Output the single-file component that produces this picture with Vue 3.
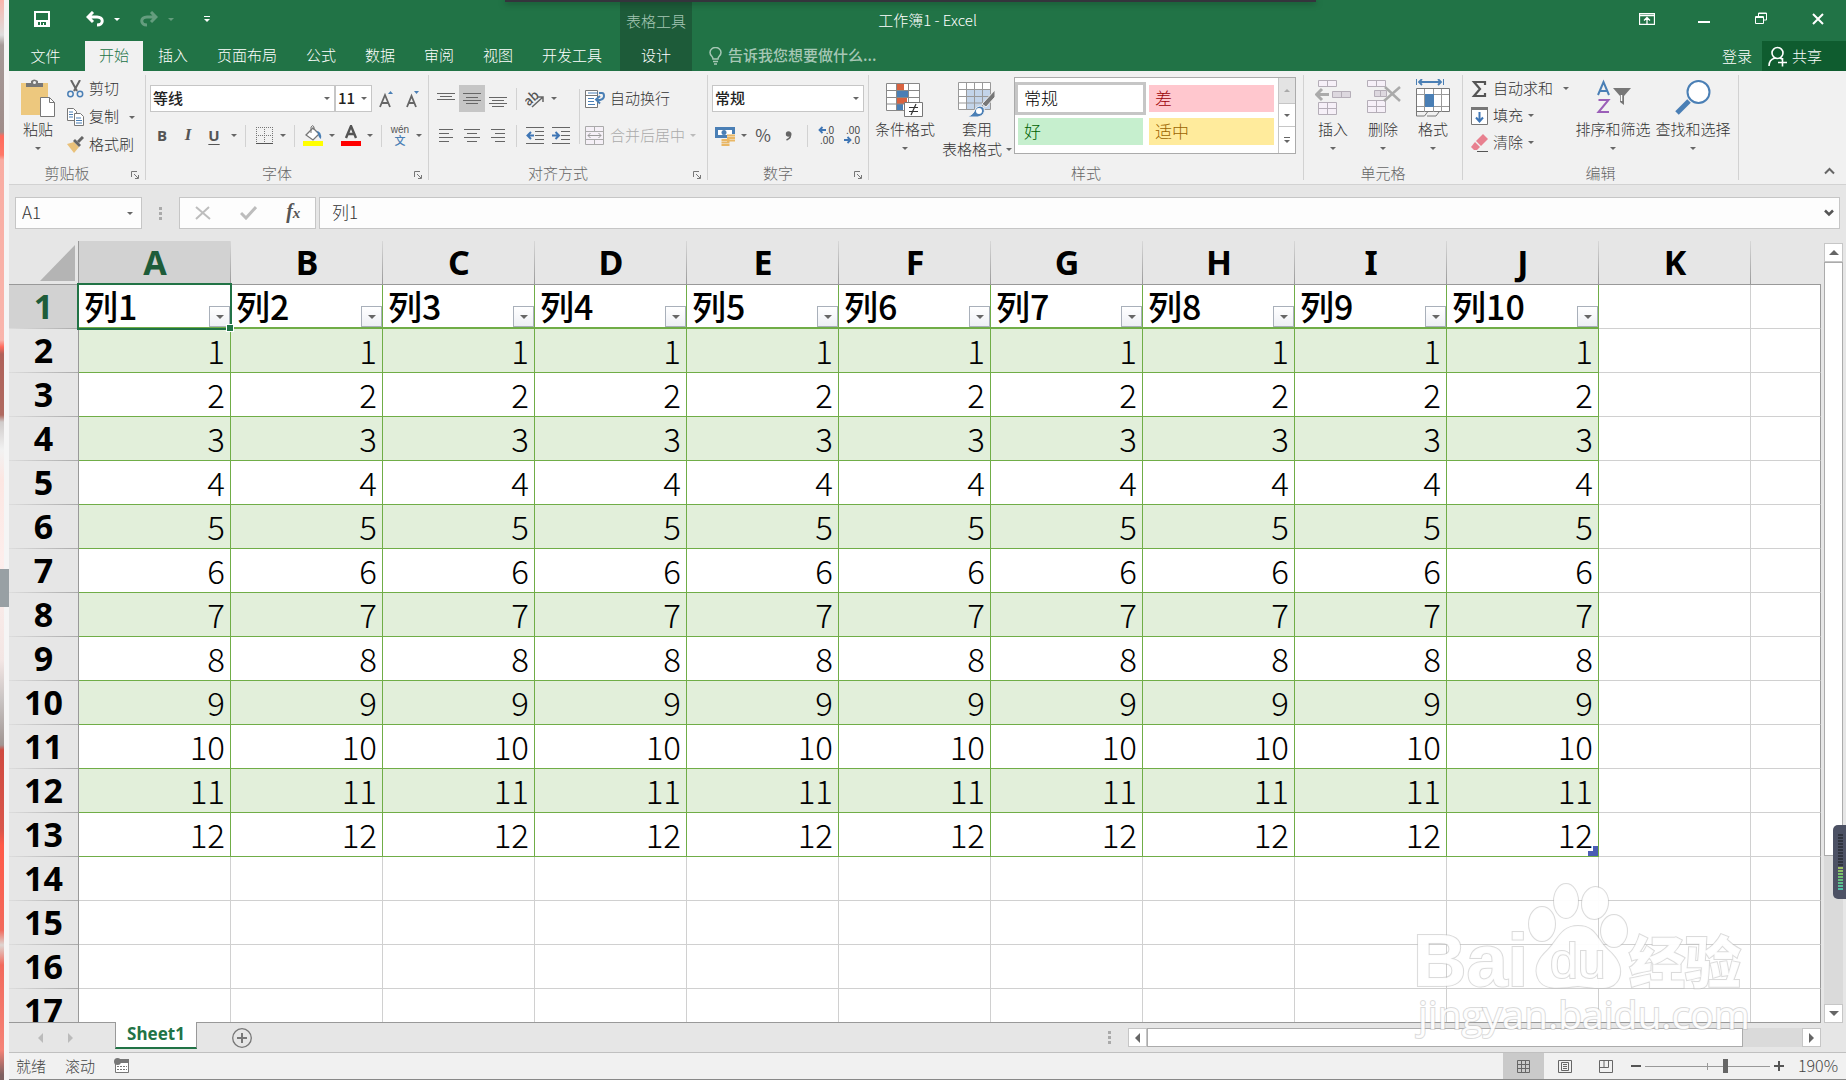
<template>
    <div class="desktop">
        <div class="behind"><span class="behind-chip"></span></div>

        <div class="window">
            <header class="header">
                <div class="quick">
                    <button class="q-save" aria-label="保存">
                        <svg width="16" height="16" viewBox="0 0 16 16"><path d="M0 0h16v16H0z M2 2v7h12V2z M4 11v3h2v-3z M7 11v3h2v-2h1v2h2v-3z" fill="#fff" fill-rule="evenodd" /></svg>
                    </button>
                    <button class="q-undo" aria-label="撤消">
                        <svg width="18" height="16" viewBox="0 0 18 16"><path d="M7 1 2 6l5 5M2 6h9c7 0 7 8 0 8" fill="none" stroke="#fff" stroke-width="3" /></svg>
                    </button>
                    <button class="q-caret" aria-label="撤消列表"><i class="caret"></i></button>
                    <button class="q-redo dim" aria-label="恢复">
                        <svg width="18" height="16" viewBox="0 0 18 16"><path d="M11 1l5 5-5 5M16 6H7c-7 0-7 8 0 8" fill="none" stroke="#fff" stroke-width="3" /></svg>
                    </button>
                    <button class="q-caret dim" aria-label="恢复列表"><i class="caret"></i></button>
                    <button class="q-more" aria-label="自定义快速访问工具栏"><i class="bar"></i><i class="caret"></i></button>
                </div>

                <div class="context-title">表格工具</div>
                <h1 class="title">工作簿1 - Excel</h1>

                <div class="win-buttons">
                    <button aria-label="功能区显示选项">
                        <svg width="16" height="12" viewBox="0 0 16 12"><path d="M.5.5h15v11H.5zM1 2.500h14M8 11V5M5 7.500l3-3 3 3" fill="none" stroke="#fff" stroke-width="1.300" /></svg>
                    </button>
                    <button aria-label="最小化">
                        <svg width="12" height="12" viewBox="0 0 12 12"><path d="M0 8h12v2H0z" fill="#fff" /></svg>
                    </button>
                    <button aria-label="还原">
                        <svg width="12" height="14" viewBox="0 0 12 14"><path d="M.5 4.500h8v7h-8zM.5 5.500h8M3.500 4V1h8v7H9M3 1.500h9" fill="none" stroke="#fff" /></svg>
                    </button>
                    <button aria-label="关闭">
                        <svg width="12" height="12" viewBox="0 0 12 12"><path d="M1 1l10 10M11 1 1 11" stroke="#fff" stroke-width="2" /></svg>
                    </button>
                </div>

                <nav class="tabs">
                    <button class="tab file">文件</button>
                    <button v-for="t in tabs" :key="t" class="tab" :class="{ active: t === activeTab }" @click="activeTab = t">{{ t }}</button>
                </nav>
                <button class="tab context-tab">设计</button>
                <div class="tab-right">
                    <svg class="bulb" width="13" height="18" viewBox="0 0 13 18"><path d="M4 12C4 9 1 9 1 5.500a5.500 5 0 0 1 11 0C12 9 9 9 9 12zM4 14.500h5M5 17h3" fill="none" stroke="#a6c7b5" stroke-width="1.500" /></svg>
                    <input class="tell" aria-label="告诉我" placeholder="告诉我您想要做什么...">
                    <a class="login" href="#">登录</a>
                    <button class="share">
                        <svg width="20" height="21" viewBox="0 0 20 21"><g fill="none" stroke="#fff" stroke-width="1.600"><circle cx="9.500" cy="7" r="5.500" /><path d="M1 20c0-4 2-7 6-8M12 12l2 1M10 16.500h9M14.500 12v8.500" /></g></svg>
                        共享
                    </button>
                </div>
            </header>

            <section class="ribbon">
                <div class="group clipboard">
                    <div class="body">
                        <button class="big paste">
                            <svg width="34" height="40" viewBox="0 0 34 40"><path d="M0 4h27v32H0z" fill="#edc87e" /><path d="M5 8V4h5V2q3-3 7 0v2h5v4z" fill="#777" /><circle cx="13.500" cy="3.500" r="1.500" fill="#f1f1f1" /><path d="M19.500 18.500h9l5 5v14h-14z" fill="#fff" stroke="#777" /><path d="M28.500 18.500v5h5" fill="none" stroke="#777" /></svg>
                            <span>粘贴</span><i class="caret"></i>
                        </button>
                        <div class="stack">
                            <button class="small">
                                <svg width="17" height="18" viewBox="0 0 17 18"><path d="M4 0l6 11M13 0 7 11" stroke="#666" stroke-width="2" /><g fill="none" stroke="#4a7fb5" stroke-width="1.500"><circle cx="3.500" cy="14" r="2.700" /><circle cx="13" cy="14" r="2.700" /></g></svg>
                                <span>剪切</span>
                            </button>
                            <button class="small">
                                <svg width="17" height="18" viewBox="0 0 17 18"><g fill="#fff" stroke="#777"><path d="M.5.5h6l3 3v9h-9z" /><path d="M7.500 5.500h6l3 3v9h-9z" /></g><path d="M2 4h4M2 6.500h4M2 9h4M9 10h5M9 12.500h6M9 15h6" stroke="#4a7fb5" /></svg>
                                <span>复制</span> <i class="caret far"></i>
                            </button>
                            <button class="small">
                                <svg width="17" height="18" viewBox="0 0 17 18"><path d="M0 8l7-2 5 5-5 6z" fill="#e9c17a" /><path d="M6 5l2-2 6 6-2 2z" fill="#666" /><path d="M11 6l5-5" stroke="#666" stroke-width="3" /></svg>
                                <span>格式刷</span>
                            </button>
                        </div>
                    </div>
                    <footer><span>剪贴板</span><svg class="launch" width="8" height="8" viewBox="0 0 8 8"><path d="M.5 6V.5H6M3 3l4 4M7.500 4v3.500H4" fill="none" stroke="#777" /></svg></footer>
                </div>

                <div class="group font">
                    <div class="body rows">
                        <div class="row">
                            <label class="combo face"><select aria-label="字体"><option>等线</option></select><i class="caret"></i></label>
                            <label class="combo size"><select aria-label="字号"><option>11</option></select><i class="caret"></i></label>
                            <button class="tool" aria-label="增大字号">
                                <svg width="16" height="18" viewBox="0 0 16 18"><path d="M1 17 6 5l5 12M3 13h6" fill="none" stroke="#666" stroke-width="1.800" /><path d="M9 4l2.500-3L14 4z" fill="#4a7fb5" /></svg>
                            </button>
                            <button class="tool" aria-label="减小字号">
                                <svg width="16" height="18" viewBox="0 0 16 18"><path d="M2 17 6.500 6 11 17M4 13h5" fill="none" stroke="#666" stroke-width="1.800" /><path d="M9 1h5l-2.500 3z" fill="#4a7fb5" /></svg>
                            </button>
                        </div>
                        <div class="row">
                            <button class="tool letter">B</button>
                            <button class="tool letter italic">I</button>
                            <button class="tool letter under">U</button>
                            <button class="drop" aria-label="下划线"><i class="caret"></i></button>
                            <i class="sep"></i>
                            <button class="tool" aria-label="边框">
                                <svg width="17" height="18" viewBox="0 0 17 18"><path d="M.5 0v16M8.500 0v16M16.500 0v16M0 .5h17M0 8.500h17" stroke="#777" stroke-dasharray="1 1" /><path d="M0 16.500h17" stroke="#555" /></svg>
                            </button>
                            <button class="drop" aria-label="边框列表"><i class="caret"></i></button>
                            <i class="sep"></i>
                            <button class="tool" aria-label="填充颜色">
                                <svg width="20" height="21" viewBox="0 0 20 21"><path d="M3 10l7-7 6 6-6 6z" fill="#fff" stroke="#777" stroke-width="1.300" /><path d="M8 8V2q2-3 3 0v3" fill="none" stroke="#777" /><path d="M13 6q6 0 5 8-3-2-3-6z" fill="#4a7fb5" /><path d="M0 16h20v5H0z" fill="#ff0" /></svg>
                            </button>
                            <button class="drop" aria-label="填充颜色列表"><i class="caret"></i></button>
                            <button class="tool" aria-label="字体颜色">
                                <svg width="20" height="21" viewBox="0 0 20 21"><path d="M5 13 10 1l5 12M7 9h6" fill="none" stroke="#555" stroke-width="2.400" /><path d="M0 16h20v5H0z" fill="red" /></svg>
                            </button>
                            <button class="drop" aria-label="字体颜色列表"><i class="caret"></i></button>
                            <i class="sep"></i>
                            <button class="tool pinyin"><span>wén</span><b>文</b></button>
                            <button class="drop" aria-label="拼音列表"><i class="caret"></i></button>
                        </div>
                    </div>
                    <footer><span>字体</span><svg class="launch" width="8" height="8" viewBox="0 0 8 8"><path d="M.5 6V.5H6M3 3l4 4M7.500 4v3.500H4" fill="none" stroke="#777" /></svg></footer>
                </div>

                <div class="group align">
                    <div class="body">
                        <div class="rows">
                            <div class="row">
                                <button v-for="(d, i) in vAlign" :key="d" class="tool" :class="{ on: i === 1 }" :aria-label="'垂直对齐' + (i + 1)">
                                    <svg width="18" height="19" viewBox="0 0 18 19"><path :d="d" stroke="#666" /></svg>
                                </button>
                                <i class="sep"></i>
                                <button class="tool" aria-label="方向">
                                    <svg width="20" height="18" viewBox="0 0 20 18"><text x="0" y="12" transform="rotate(-42 8 10)" class="ab">ab</text><path d="M7 17 18 7M13 7h5v5" fill="none" stroke="#666" stroke-width="1.500" /></svg>
                                </button>
                                <button class="drop" aria-label="方向列表"><i class="caret"></i></button>
                            </div>
                            <div class="row">
                                <button v-for="(d, i) in hAlign" :key="d" class="tool" :aria-label="'水平对齐' + (i + 1)">
                                    <svg width="16" height="13" viewBox="0 0 16 13"><path :d="d" stroke="#666" /></svg>
                                </button>
                                <i class="sep"></i>
                                <button class="tool" aria-label="减少缩进">
                                    <svg width="18" height="17" viewBox="0 0 18 17"><path d="M0 .5h18M9 4.500h9M9 8.500h9M9 12.500h9M0 16.500h18" stroke="#666" /><path d="M8 8.500H2M5 5 1.500 8.500 5 12" fill="none" stroke="#3f76b5" stroke-width="2" /></svg>
                                </button>
                                <button class="tool" aria-label="增加缩进">
                                    <svg width="18" height="17" viewBox="0 0 18 17"><path d="M0 .5h18M9 4.500h9M9 8.500h9M9 12.500h9M0 16.500h18" stroke="#666" /><path d="M0 8.500h6M3.500 5 7 8.500 3.500 12" fill="none" stroke="#3f76b5" stroke-width="2" /></svg>
                                </button>
                            </div>
                        </div>
                        <i class="sep tall"></i>
                        <div class="rows">
                            <button class="small wide">
                                <svg width="20" height="20" viewBox="0 0 20 20"><path d="M.5 1.500h12v17H.5zM.5 6.500h12" fill="#fff" stroke="#777" /><path d="M3 4h10M3 9.500h6M3 12.500h6M3 15.500h7" stroke="#4a7fb5" /><path d="M14 4h3q2 0 2 3t-4 4h-3M15 7l-4 3.500 4 4" fill="none" stroke="#4a7fb5" stroke-width="2" /></svg>
                                <span>自动换行</span>
                            </button>
                            <button class="small wide off">
                                <svg width="20" height="20" viewBox="0 0 20 20"><path d="M.5.5h18v18H.5zM.5 5.500h18M.5 13.500h18M9.500.5v5M9.500 13.500v5" fill="#f5f0f7" stroke="#aaa" /><path d="M3 9.500h13M5.500 7 3 9.500 5.500 12M13.500 7 16 9.500 13.500 12" fill="none" stroke="#999" /></svg>
                                <span>合并后居中</span> <i class="caret"></i>
                            </button>
                        </div>
                    </div>
                    <footer><span>对齐方式</span><svg class="launch" width="8" height="8" viewBox="0 0 8 8"><path d="M.5 6V.5H6M3 3l4 4M7.500 4v3.500H4" fill="none" stroke="#777" /></svg></footer>
                </div>

                <div class="group number">
                    <div class="body rows">
                        <div class="row">
                            <label class="combo format"><select aria-label="数字格式"><option>常规</option></select><i class="caret"></i></label>
                        </div>
                        <div class="row">
                            <button class="tool" aria-label="会计数字格式">
                                <svg width="20" height="20" viewBox="0 0 20 20"><path d="M0 1h20v11H0z" fill="#4a7fb5" /><path d="M3 4h14v5H3z" fill="#fff" /><circle cx="9" cy="6.500" r="2.500" fill="#4a7fb5" /><path d="M12 8h8v9h-8zM6 13h8v7H6z" fill="#f1f1f1" /><path d="M12 9.500h8M12 12h8M12 14.500h8M6.500 14h8M6.500 16.500h8M6.500 19h8" stroke="#e9b765" stroke-width="2" /></svg>
                            </button>
                            <button class="drop" aria-label="会计格式列表"><i class="caret"></i></button>
                            <button class="tool percent">%</button>
                            <button class="tool" aria-label="千位分隔样式">
                                <svg width="8" height="12" viewBox="0 0 8 12"><circle cx="3.500" cy="4" r="2.700" fill="#666" /><path d="M5.500 3q1 5-4 7" fill="none" stroke="#666" stroke-width="1.600" /></svg>
                            </button>
                            <i class="sep"></i>
                            <button class="tool decimal"><span><svg width="8" height="8" viewBox="0 0 8 8"><path d="M8 4H2M4.500 1 1.500 4l3 3" fill="none" stroke="#3f76b5" stroke-width="1.800" /></svg>.0</span><span>.00</span></button>
                            <button class="tool decimal"><span>.00</span><span><svg width="8" height="8" viewBox="0 0 8 8"><path d="M0 4h6M3.500 1l3 3-3 3" fill="none" stroke="#3f76b5" stroke-width="1.800" /></svg>.0</span></button>
                        </div>
                    </div>
                    <footer><span>数字</span><svg class="launch" width="8" height="8" viewBox="0 0 8 8"><path d="M.5 6V.5H6M3 3l4 4M7.500 4v3.500H4" fill="none" stroke="#777" /></svg></footer>
                </div>

                <div class="group styles">
                    <div class="body">
                        <button class="big b72">
                            <svg width="38" height="40" viewBox="0 0 38 40"><path d="M.5 4.500h33v27H.5z" fill="#fff" /><path d="M11 5h7v7h-7zM11 19h10v6H11z" fill="#d9623f" /><path d="M11 12h11v6H11zM11 25h6v6h-6z" fill="#4a7fb5" /><path d="M.5 4.500h33v27H.5zM.5 11.500h33M.5 18.500h33M.5 25h33M10.500 4v27M22.500 4v27" fill="none" stroke="#888" /><path d="M18.500 23.500h18v14h-18z" fill="#fff" stroke="#777" /><path d="M23 28.500h9M23 32.500h9M30 25l-5 11" stroke="#333" stroke-width="1.200" /></svg>
                            <span>条件格式</span><i class="caret"></i>
                        </button>
                        <button class="big b72">
                            <svg width="38" height="40" viewBox="0 0 38 40"><path d="M.5 3.500h32v27H.5z" fill="#fff" /><path d="M9 11h23v20H9z" fill="#c3d4e9" /><path d="M.5 3.500h32v27H.5zM.5 10.500h32M.5 17.500h32M.5 24h32M8.500 3v27M16.500 3v27M24.500 3v27" fill="none" stroke="#999" /><path d="M37 11v7l-9 10-4-3z" fill="#777" stroke="#f1f1f1" /><path d="M10 38q6-3 8-9 4-4 8 0 2 7-6 9z" fill="#4a7fb5" stroke="#f1f1f1" /><circle cx="21" cy="32" r="3" fill="#fff" /></svg>
                            <span>套用</span><span class="inline">表格格式<i class="caret"></i></span>
                        </button>
                        <div class="gallery">
                            <div class="swatches">
                                <button v-for="s in styles" :key="s.name" class="swatch" :class="s.cls">{{ s.name }}</button>
                            </div>
                            <div class="gallery-nav">
                                <button class="faded" aria-label="上一行"><i class="caret up"></i></button>
                                <button aria-label="下一行"><i class="caret"></i></button>
                                <button aria-label="其他样式"><i class="bar"></i><i class="caret"></i></button>
                            </div>
                        </div>
                    </div>
                    <footer><span>样式</span></footer>
                </div>

                <div class="group cells">
                    <div class="body">
                        <button class="big b50">
                            <svg width="36" height="40" viewBox="0 0 36 40"><g fill="#f6f0f8" stroke="#b5aeb8"><path d="M3.500 1.500h18v6h-18zM12.500 1.500v6M3.500 23.500h18v12h-18zM12.500 23.500v12M3.500 29.500h18" /><path d="M17.500 12.500h18v6h-18zM26.500 12.500v6" fill="#ddd8df" /></g><path d="M14 15.500H2M7 10l-5.500 5.500L7 21" fill="none" stroke="#aaa" stroke-width="3" /></svg>
                            <span>插入</span><i class="caret"></i>
                        </button>
                        <button class="big b50">
                            <svg width="36" height="40" viewBox="0 0 36 40"><g fill="#f6f0f8" stroke="#b5aeb8"><path d="M2.500 1.500h18v6h-18zM11.500 1.500v6M2.500 21.500h18v12h-18zM11.500 21.500v12M2.500 27.500h18" /><path d="M9.500 11.500h12v6h-12zM15.500 11.500v6" fill="#ddd8df" /></g><path d="M20 8l15 14M35 8 19 22" stroke="#aaa" stroke-width="2.500" /></svg>
                            <span>删除</span><i class="caret"></i>
                        </button>
                        <button class="big b50">
                            <svg width="36" height="40" viewBox="0 0 36 40"><path d="M1.500 0v6M28.500 0v6" stroke="#4a7fb5" /><path d="M4 3h22M7 0 4 3l3 3M23 0l3 3-3 3" fill="none" stroke="#4a7fb5" stroke-width="1.800" /><path d="M1.500 9.500h33v23h-33z" fill="#fff" stroke="#777" /><path d="M9.500 10v23M18.500 10v23M26.500 10v23M2 15.500h32M2 27.500h32" stroke="#999" /><path d="M10 15h9v13h-9z" fill="#4a7fb5" /><path d="M1.500 32v5h8l3-4 M12 37h9l3-4" fill="none" stroke="#777" /></svg>
                            <span>格式</span><i class="caret"></i>
                        </button>
                    </div>
                    <footer><span>单元格</span></footer>
                </div>

                <div class="group edit">
                    <div class="body">
                        <div class="stack">
                            <button class="small">
                                <svg width="17" height="18" viewBox="0 0 17 18"><path d="M14 5V2H3l6 7-6 7h11v-3" fill="none" stroke="#555" stroke-width="2.200" /></svg>
                                <span>自动求和</span> <i class="caret far"></i>
                            </button>
                            <button class="small">
                                <svg width="17" height="18" viewBox="0 0 17 18"><path d="M.5.5h16v17H.5z" fill="#fff" stroke="#777" /><path d="M0 0h17v3H0z" fill="#777" /><path d="M8.500 5v9M5 10.500l3.500 4 3.500-4" fill="none" stroke="#3f76b5" stroke-width="2" /></svg>
                                <span>填充</span><i class="caret"></i>
                            </button>
                            <button class="small">
                                <svg width="17" height="18" viewBox="0 0 17 18"><path d="M5 7l7-7 5 5-7 7z" fill="#e8808f" /><path d="M4 8l5 5-3 3H3l-3-3z" fill="#e8808f" /><path d="M6 17.500h11" stroke="#555" /></svg>
                                <span>清除</span><i class="caret"></i>
                            </button>
                        </div>
                        <button class="big b80">
                            <svg width="36" height="40" viewBox="0 0 36 40"><path d="M3 16 8.500 3 14 16M5 12h7" fill="none" stroke="#4a7fb5" stroke-width="2" /><path d="M3.500 21h10l-10 12H14" fill="none" stroke="#9b5fb8" stroke-width="2" /><path d="M18 9h18l-7 8v9l-4-3v-6z" fill="#777" /><path d="M26.500 16v6" stroke="#fff" stroke-width="1.500" /></svg>
                            <span>排序和筛选</span><i class="caret"></i>
                        </button>
                        <button class="big b80">
                            <svg width="36" height="40" viewBox="0 0 36 40"><path d="M14 22 2 34" stroke="#4a7fb5" stroke-width="5" /><circle cx="23.500" cy="13" r="11" fill="#fff" stroke="#4a7fb5" stroke-width="2" /></svg>
                            <span>查找和选择</span><i class="caret"></i>
                        </button>
                    </div>
                    <footer><span>编辑</span></footer>
                </div>

                <button class="collapse" aria-label="折叠功能区">
                    <svg width="11" height="8" viewBox="0 0 11 8"><path d="M1 6.500l4.500-4.500L10 6.500" fill="none" stroke="#666" stroke-width="2" /></svg>
                </button>
            </section>

            <section class="formula">
                <label class="name-box"><input aria-label="名称框" value="A1"><i class="caret"></i></label>
                <span class="dots"><i></i><i></i><i></i></span>
                <div class="fx">
                    <button aria-label="取消"><svg width="16" height="14" viewBox="0 0 16 14"><path d="M1 1l14 12M14 1 1 13" stroke="#bdbdbd" stroke-width="2" /></svg></button>
                    <button aria-label="输入"><svg width="17" height="14" viewBox="0 0 17 14"><path d="M1 7l5 5L16 1" fill="none" stroke="#bdbdbd" stroke-width="3" /></svg></button>
                    <button class="fn">f<small>x</small></button>
                </div>
                <label class="entry">
                    <input aria-label="编辑栏" value="列1">
                    <svg width="10" height="8" viewBox="0 0 10 8"><path d="M1 1.500l4 4 4-4" fill="none" stroke="#555" stroke-width="2.500" /></svg>
                </label>
            </section>

            <section class="sheet">
                <div class="grid">
                    <table>
                        <thead>
                            <tr>
                                <th class="corner"><svg width="35" height="36" viewBox="0 0 35 36"><path d="M35 0v36H0z" fill="#b4b4b4" /></svg></th>
                                <th v-for="(c, i) in letters" :key="c" class="col" :class="{ sel: i === 0 }">{{ c }}</th>
                                <th class="col rest"></th>
                            </tr>
                        </thead>
                        <tbody>
                            <tr v-for="r in 17" :key="r" :class="rowClass(r)">
                                <th class="row-no" :class="{ sel: r === 1 }">{{ r }}</th>
                                <td v-for="(c, i) in letters" :key="c" :class="{ data: i < 10 && r < 14 }">
                                    <template v-if="r === 1 && i < 10">
                                        列{{ i + 1 }}
                                        <button class="filter" :aria-label="'筛选列' + (i + 1)"><i class="caret"></i></button>
                                        <span v-if="i === 0" class="cursor"></span>
                                    </template>
                                    <template v-else-if="r < 14 && i < 10">{{ r - 1 }}</template>
                                    <span v-if="r === 13 && i === 9" class="handle"></span>
                                </td>
                                <td class="rest"></td>
                            </tr>
                        </tbody>
                    </table>
                </div>
                <div class="vscroll">
                    <button aria-label="向上滚动"><i class="tri up"></i></button>
                    <div class="track"><div class="thumb"></div></div>
                    <button aria-label="向下滚动"><i class="tri down"></i></button>
                </div>
            </section>

            <section class="sheet-bar">
                <button class="nav" aria-label="上一张"><i class="tri left"></i></button>
                <button class="nav" aria-label="下一张"><i class="tri right"></i></button>
                <button class="sheet-tab">Sheet1</button>
                <button class="add" aria-label="新工作表">
                    <svg width="20" height="20" viewBox="0 0 20 20"><circle cx="10" cy="10" r="9.300" fill="none" stroke="#777" stroke-width="1.300" /><path d="M5 10h10M10 5v10" stroke="#777" stroke-width="2" /></svg>
                </button>
                <span class="dots"><i></i><i></i><i></i></span>
                <div class="hscroll">
                    <button aria-label="向左滚动"><i class="tri left"></i></button>
                    <div class="track"><div class="thumb"></div></div>
                    <button aria-label="向右滚动"><i class="tri right"></i></button>
                </div>
            </section>

            <footer class="status">
                <span>就绪</span>
                <span>滚动</span>
                <svg width="15" height="16" viewBox="0 0 15 16"><path d="M1.500 5v9.500h13V2" fill="#fff" stroke="#777" /><path d="M6 1h9v4H6z" fill="#777" /><circle cx="3.500" cy="3.500" r="3.500" fill="#777" /><path d="M3 8.500h10M3 11.500h10" stroke="#777" stroke-dasharray="2 1" /></svg>
                <div class="views">
                    <button class="on" aria-label="普通"><svg width="13" height="13" viewBox="0 0 13 13"><path d="M.5.5h12v12H.5zM.5 4.500h12M.5 8.500h12M4.500.5v12M8.500.5v12" fill="none" stroke="#666" /></svg></button>
                    <button aria-label="页面布局"><svg width="14" height="13" viewBox="0 0 14 13"><path d="M.5.5h13v12H.5zM3.500 2.500h7v8h-7zM5 4.500h4M5 6.500h4M5 8.500h4" fill="none" stroke="#666" /></svg></button>
                    <button aria-label="分页预览"><svg width="14" height="13" viewBox="0 0 14 13"><path d="M.5.5h13v12H.5zM.5 7.500h9M5 .5v7M9.500.5v7" fill="none" stroke="#666" /></svg></button>
                </div>
                <button class="zoom-btn" aria-label="缩小"><svg width="10" height="10" viewBox="0 0 10 10"><path d="M0 4h10v2H0z" fill="#555" /></svg></button>
                <input class="zoom" type="range" min="0" max="100" v-model="zoom" aria-label="缩放">
                <button class="zoom-btn" aria-label="放大"><svg width="10" height="10" viewBox="0 0 10 10"><path d="M0 4h4V0h2v4h4v2H6v4H4V6H0z" fill="#555" /></svg></button>
                <button class="percent-label">190%</button>
            </footer>
        </div>

        <div class="float-bar"></div>
        <div class="meter"><i></i></div>

        <svg class="mark" width="340" height="190" viewBox="0 0 340 190">
            <g class="mark-shape">
                <text x="3" y="106" class="m-latin">Bai</text>
                <ellipse cx="132" cy="44" rx="13" ry="17" />
                <ellipse cx="156" cy="21" rx="12" ry="17" />
                <ellipse cx="185" cy="23" rx="13" ry="16" transform="rotate(8 185 23)" />
                <ellipse cx="204" cy="51" rx="13" ry="16" />
                <path d="M168 46C151 46 148 60 138 70C128 79 124 88 128 98C133 111 150 108 168 106C186 108 203 112 209 98C213 87 207 78 198 70C187 60 186 46 168 46z" />
                <text x="140" y="98" class="m-du">du</text>
                <text x="219" y="103" class="m-cjk">经验</text>
                <text x="8" y="149" class="m-url">jingyan.baidu.com</text>
            </g>
        </svg>
    </div>
</template>

<script setup>
import { ref } from 'vue'

const tabs = ['开始', '插入', '页面布局', '公式', '数据', '审阅', '视图', '开发工具']
const activeTab = ref('开始')
const zoom = ref(65)

const letters = 'ABCDEFGHIJK'.split('')

const styles = [
    { name: '常规', cls: 'normal' },
    { name: '差', cls: 'bad' },
    { name: '好', cls: 'good' },
    { name: '适中', cls: 'neutral' },
]

// линии значков выравнивания
const vAlign = [
    'M0 4.500h18M3 7.500h12M0 10.500h18',
    'M0 4.500h18M3 8.500h12M0 11.500h18M3 14.500h12',
    'M0 8.500h18M3 11.500h12M0 14.500h18M3 17.500h12',
]
const hAlign = [
    'M1 .5h14M1 4.500h10M1 8.500h14M1 12.500h10',
    'M0 .5h16M3 4.500h10M0 8.500h16M3 12.500h10',
    'M1 .5h14M5 4.500h10M1 8.500h14M5 12.500h10',
]

function rowClass(r) {
    if (r === 1) return 'head'
    return r < 14 && r % 2 === 0 ? 'band' : ''
}
</script>

<style>
body {
    margin: 0;
    overflow: hidden;
}
</style>

<style scoped>
* {
    box-sizing: border-box;
}

button {
    display: flex;
    align-items: center;
    justify-content: center;
    flex: none;
    margin: 0;
    padding: 0;
    border: 0;
    background: none;
    color: inherit;
    font: inherit;
    white-space: nowrap;
}

input,
select {
    min-width: 0;
    margin: 0;
    border: 0;
    background: none;
    color: inherit;
    font: inherit;
    outline: none;
}

svg {
    flex: none;
}

.desktop {
    position: relative;
    display: flex;
    height: 100vh;
    overflow: hidden;
    font-family: "Noto Sans CJK SC", sans-serif;
    font-size: 15px;
    font-weight: 300;
    line-height: 20px;
    color: #333;
}

/* полоска рабочего стола слева от окна */
.behind {
    display: flex;
    flex: none;
    align-items: center;
    width: 9px;
    border-right: 5px solid #f5f5f5;
    background: linear-gradient(#f9b5ac 0, #ddd 35px, #a59a98 45px, #a08d8a 132px, #ff6a5c 136px, #ff7868 155px, #f9aca2 160px, #f9b5ac 340px, #ff6a5c 347px, #b0625a 354px, #b06a60 415px, #d0cccb 422px, #f2f2f2 450px, #fce6e2 480px, #fdeeec 560px, #f3e6e4 660px, #c9c4c3 700px, #a09592 745px, #d04a40 750px, #d9564b 830px, #ff5a48 845px, #f2695c 930px, #ded6d2 945px, #f2695c 965px, #f58377 1050px, #7d6060 1075px);
}

.behind-chip {
    flex: none;
    width: 9px;
    height: 38px;
    margin-top: 96px;
    background: #98a0a4;
}

.window {
    display: flex;
    flex: 1;
    flex-direction: column;
    min-width: 0;
    background: #e6e6e6;
}

/* заголовок */
.header {
    display: grid;
    flex: none;
    grid-template-columns: 611px 72px 1fr;
    grid-template-rows: 41px 30px;
    background: #217346;
    color: #fff;
}

.quick {
    display: flex;
    grid-area: 1 / 1;
    padding: 0 0 8px 7px;
}

.quick button {
    height: 38px;
}

.q-save {
    width: 52px;
}

.q-undo {
    width: 34px;
    margin-left: 10px;
}

.q-redo {
    width: 34px;
    margin-left: 10px;
}

.q-caret {
    width: 10px;
}

.q-more {
    flex-direction: column;
    gap: 2px;
    width: 62px;
}

.dim {
    opacity: .3;
}

.caret {
    flex: none;
    width: 0;
    height: 0;
    border: 3px solid transparent;
    border-top-color: #666;
    border-bottom: 0;
}

.caret.up {
    border-top: 0;
    border-bottom: 3px solid #aaa;
}

.quick .caret {
    border-top-color: #fff;
}

.bar {
    width: 6px;
    height: 1px;
    background: #666;
}

.quick .bar {
    background: #fff;
}

.context-title {
    grid-area: 1 / 2;
    padding-top: 2px;
    background: #1d5b39;
    color: #a6c7b5;
    line-height: 38px;
    text-align: center;
}

.title {
    grid-area: 1 / 1 / 2 / 4;
    justify-self: center;
    margin: 0;
    font-size: 15px;
    font-weight: 300;
    line-height: 39px;
}

.win-buttons {
    display: flex;
    grid-area: 1 / 3;
    justify-self: end;
    height: 38px;
}

.win-buttons button {
    width: 57px;
}

.tabs {
    display: flex;
    gap: 1px;
    grid-area: 2 / 1;
}

.tab {
    padding: 0 14px 2px;
}

.tab.file {
    width: 73px;
    padding-bottom: 0;
    margin-right: 2px;
}

.tab.active {
    background: #f1f1f1;
    color: #217346;
}

.context-tab {
    grid-area: 2 / 2;
    background: #1d5b39;
}

.tab-right {
    display: flex;
    grid-area: 2 / 3;
    align-items: center;
    padding-left: 17px;
}

.tell {
    flex: 1;
    padding: 0 6px 2px;
    font-weight: 500;
}

.tell::placeholder {
    color: #a6c7b5;
    opacity: 1;
}

.login {
    margin-right: 10px;
    color: #fff;
    text-decoration: none;
}

.share {
    gap: 4px;
    justify-content: flex-start;
    width: 84px;
    height: 30px;
    padding-left: 6px;
    background: #0f5c2f;
}

/* лента */
.ribbon {
    display: flex;
    flex: none;
    height: 114px;
    padding: 4px 0;
    border-bottom: 1px solid #d2d2d2;
    background: #f1f1f1;
}

.group {
    display: flex;
    flex: none;
    flex-direction: column;
    height: 105px;
    border-right: 1px solid #d2d2d2;
}

.group footer {
    display: grid;
    grid-template-columns: 1fr auto;
    height: 16px;
    color: #666;
    line-height: 20px;
    text-align: center;
}

.launch {
    margin: 8px 6px 0;
}

.body {
    display: flex;
    height: 88px;
}

.rows {
    display: flex;
    flex-direction: column;
    gap: 10px;
    padding-top: 10px;
}

.body.rows {
    padding-left: 4px;
}

.row {
    display: flex;
    align-items: center;
    height: 27px;
}

.clipboard {
    width: 137px;
}

.font {
    width: 283px;
}

.align {
    width: 279px;
}

.align .body {
    padding-left: 4px;
}

.number {
    width: 161px;
}

.styles {
    width: 435px;
}

.cells {
    width: 159px;
}

.edit {
    width: 276px;
}

.cells .body {
    padding-left: 4px;
}

.big {
    flex-direction: column;
    justify-content: flex-start;
    height: 88px;
    padding-top: 4px;
}

.big > .caret {
    margin-top: 8px;
}

.big .inline {
    display: flex;
    align-items: center;
    gap: 4px;
}

.paste {
    width: 58px;
}

.b50 {
    width: 50px;
}

.b72 {
    width: 72px;
}

.b80 {
    width: 80px;
}

.edit .stack {
    width: 110px;
    padding-left: 8px;
}

.small {
    gap: 5px;
    justify-content: flex-start;
    height: 28px;
}

.small span {
    padding-bottom: 2px;
}

.edit .small {
    height: 27px;
}

.small.wide {
    height: 27px;
}

.far {
    margin-left: 5px;
}

.off {
    color: #aaa;
}

.off .caret {
    border-top-color: #bbb;
}

.tool {
    width: 26px;
    height: 27px;
}

.tool.on {
    background: #c6c6c6;
}

.drop {
    width: 12px;
    height: 26px;
}

.sep {
    flex: none;
    width: 1px;
    height: 22px;
    margin: 0 5px;
    background: #d2d2d2;
}

.sep.tall {
    height: 55px;
    margin-top: 14px;
}

.letter {
    padding: 0 2px 2px 0;
    color: #555;
    font-family: "Open Sans", sans-serif;
    font-weight: 700;
}

.italic {
    font-family: "Liberation Serif", serif;
    font-size: 17px;
    font-style: italic;
}

.under {
    text-decoration: underline;
    text-underline-offset: 3px;
}

.ab {
    fill: #555;
    font-size: 13px;
    font-weight: 500;
}

.pinyin {
    flex-direction: column;
    color: #555;
    font-family: "Liberation Sans", "Noto Sans CJK SC", sans-serif;
    font-size: 10px;
    line-height: 10px;
}

.pinyin b {
    color: #4a7fb5;
    font-size: 11px;
    font-weight: 500;
    line-height: 12px;
}

.percent {
    padding-bottom: 2px;
    color: #555;
    font-size: 17px;
    font-weight: 400;
}

.decimal {
    flex-direction: column;
    align-items: flex-end;
    padding-right: 5px;
    color: #444;
    font-family: "Liberation Sans", sans-serif;
    font-size: 10px;
    font-weight: 500;
    line-height: 10px;
}

.combo {
    display: grid;
    align-items: center;
    height: 27px;
    border: 1px solid #c6c6c6;
    background: #fff;
}

.combo select,
.combo .caret {
    grid-area: 1 / 1;
}

.combo select {
    width: 100%;
    padding: 0 0 2px 2px;
    appearance: none;
    color: #222;
    font-weight: 500;
}

.combo .caret {
    justify-self: end;
    margin-right: 4px;
}

.face {
    width: 185px;
}

.size {
    width: 37px;
    margin-right: 2px;
}

.format {
    width: 152px;
}

.gallery {
    display: flex;
    width: 282px;
    height: 77px;
    margin: 2px 0 0 1px;
    border: 1px solid #ababab;
    background: #fff;
}

.swatches {
    display: grid;
    flex: 1;
    grid-template-columns: 1fr 1fr;
    grid-template-rows: 27px 27px;
    gap: 6px;
    padding: 7px 4px 0 3px;
}

.swatch {
    justify-content: flex-start;
    padding: 0 0 2px 6px;
    font-size: 17px;
}

.normal {
    outline: 3px solid #c6c6c6;
    color: #000;
}

.bad {
    background: #ffc7ce;
    color: #9c0006;
}

.good {
    background: #c6efce;
    color: #006100;
}

.neutral {
    background: #ffeb9c;
    color: #9c6500;
}

.gallery-nav {
    display: grid;
    grid-template-rows: 26px 23px 26px;
    width: 17px;
    border-left: 1px solid #c6c6c6;
}

.gallery-nav button {
    flex-direction: column;
    gap: 2px;
    border-bottom: 1px solid #c6c6c6;
}

.gallery-nav button:last-child {
    border-bottom: 0;
}

.gallery-nav .faded {
    background: #e3e3e3;
}

.collapse {
    align-self: flex-end;
    width: 24px;
    height: 18px;
    margin: 0 5px 0 auto;
}

/* строка формул */
.formula {
    display: flex;
    flex: none;
    align-items: center;
    height: 56px;
    padding: 0 6px;
}

.name-box,
.fx,
.entry {
    display: flex;
    align-items: center;
    height: 32px;
    border: 1px solid #c6c6c6;
    background: #fdfdfd;
    font-size: 17px;
}

.name-box {
    width: 127px;
    padding: 0 8px 0 6px;
}

.name-box input,
.entry input {
    flex: 1;
    padding: 0 0 2px;
}

.dots {
    display: flex;
    flex: none;
    flex-direction: column;
    gap: 2px;
    align-items: center;
    width: 37px;
}

.dots i {
    width: 3px;
    height: 3px;
    background: #aaa;
}

.fx {
    justify-content: space-around;
    width: 137px;
    margin-right: 3px;
}

.fn {
    align-items: baseline;
    padding-bottom: 2px;
    color: #555;
    font-family: "Liberation Serif", serif;
    font-size: 20px;
    font-style: italic;
    font-weight: 700;
}

.fn small {
    font-size: 15px;
}

.entry {
    flex: 1;
    padding: 0 5px 0 12px;
}

/* таблица */
.sheet {
    display: flex;
    flex: 1;
    min-height: 0;
}

.grid {
    flex: 1;
    min-width: 0;
    overflow: hidden;
    border-bottom: 1px solid #999;
}

table {
    width: 100%;
    border-collapse: separate;
    border-spacing: 0;
    table-layout: fixed;
}

th,
td {
    position: relative;
    width: 152px;
    height: 44px;
    padding: 0 0 2px;
    border: solid #d0d0d0;
    border-width: 0 1px 1px 0;
    line-height: 38px;
}

td {
    padding: 2px 5px 0;
    background: #fff;
    color: #000;
    font-size: 33px;
    text-align: right;
    vertical-align: top;
    white-space: nowrap;
}

th {
    background: #e6e6e6;
    color: #000;
    font-family: "Noto Sans", sans-serif;
    font-size: 34px;
    font-weight: 700;
}

.corner {
    width: 70px;
    padding: 0;
    border-color: #999;
    line-height: 0;
    text-align: right;
}

.corner svg {
    margin-right: 3px;
}

.col {
    border-right: 0;
    border-bottom-color: #999;
    background: linear-gradient(#d8d8d8, #999) right / 1px 100% no-repeat #e6e6e6;
}

.row-no {
    border-right-color: #999;
    border-bottom: 0;
    background: linear-gradient(90deg, #ddd, #aaa) bottom / 100% 1px no-repeat #e6e6e6;
}

th.sel {
    background-color: #d2d2d2;
    color: #1e5c39;
}

th.rest {
    background: #e6e6e6;
}

.rest {
    width: auto;
}

td.rest {
    border-right-color: #999;
}

td.data {
    border-color: #70ad47;
}

.band td.data {
    background: #e2efda;
}

.head td.data {
    border-bottom-width: 2px;
    font-size: 34px;
    font-weight: 500;
    text-align: left;
}

.filter {
    position: absolute;
    right: 0;
    bottom: 0;
    width: 21px;
    height: 21px;
    border: 1px solid #a9b0ba;
    background: linear-gradient(#fff, #eef0f5);
}

.filter .caret {
    border-width: 4px 4px 0;
}

.cursor {
    position: absolute;
    inset: -2px -2px -3px -2px;
    z-index: 2;
    border: 2px solid #217346;
}

.cursor::after {
    content: "";
    position: absolute;
    right: -3px;
    bottom: -3px;
    width: 6px;
    height: 6px;
    outline: 1px solid #fff;
    background: #217346;
}

.handle {
    position: absolute;
    right: 0;
    bottom: 0;
    width: 10px;
    height: 10px;
    background: #4a5db5;
    clip-path: polygon(50% 0, 100% 0, 100% 100%, 0 100%, 0 50%, 50% 50%);
}

/* прокрутка */
.vscroll {
    display: flex;
    flex: none;
    flex-direction: column;
    width: 25px;
    padding: 2px 3px 0;
}

.vscroll button,
.hscroll button {
    width: 19px;
    height: 19px;
    border: 1px solid #c6c6c6;
    background: #fff;
}

.track {
    flex: 1;
    background: #dadada;
}

.thumb {
    border: 1px solid #ababab;
    background: #fff;
}

.vscroll .thumb {
    height: 80%;
}

.hscroll .thumb {
    width: 91%;
    height: 19px;
}

.tri {
    border: 5px solid transparent;
}

.tri.up {
    border-top: 0;
    border-bottom-color: #666;
}

.tri.down {
    border-bottom: 0;
    border-top-color: #666;
}

.tri.left {
    border-left: 0;
    border-right-color: #666;
}

.tri.right {
    border-right: 0;
    border-left-color: #666;
}

.sheet-bar {
    display: flex;
    flex: none;
    align-items: center;
    height: 29px;
    padding-right: 25px;
}

.nav {
    width: 30px;
}

.nav:first-child {
    margin-left: 16px;
}

.nav .tri.left {
    border-right-color: #bbb;
}

.nav .tri.right {
    border-left-color: #bbb;
}

.sheet-tab {
    z-index: 1;
    align-self: flex-start;
    width: 82px;
    height: 27px;
    margin: -1px 35px 0 30px;
    padding-bottom: 2px;
    border: 1px solid #999;
    border-width: 0 1px 2px;
    border-bottom-color: #217346;
    background: #fff;
    color: #217346;
    font-family: "Noto Sans", sans-serif;
    font-size: 17px;
    font-weight: 700;
}

.sheet-bar .dots {
    margin-left: auto;
}

.hscroll {
    display: flex;
    width: 693px;
}

.status {
    display: flex;
    flex: none;
    align-items: center;
    height: 28px;
    padding-left: 7px;
    border-top: 1px solid #c0c0c0;
    border-bottom: 1px solid #888;
    background: #f1f1f1;
    color: #444;
}

.status span {
    margin-right: 19px;
}

.views {
    display: flex;
    align-self: stretch;
    margin: 0 5px 0 auto;
}

.views button {
    width: 41px;
}

.views .on {
    background: #cacaca;
}

.zoom-btn {
    width: 10px;
}

.zoom {
    width: 125px;
    height: 15px;
    margin: 0 4px;
    appearance: none;
    background: linear-gradient(#999, #999) center / 100% 1px no-repeat, linear-gradient(#999, #999) center / 1px 7px no-repeat;
}

.zoom::-webkit-slider-thumb {
    width: 5px;
    height: 14px;
    appearance: none;
    background: #666;
}

.percent-label {
    width: 62px;
    padding: 0 0 2px 6px;
    font-size: 16px;
}

/* то, что висит поверх окна */
.float-bar {
    position: absolute;
    top: 0;
    left: 505px;
    width: 811px;
    height: 2px;
    background: #34343c;
    box-shadow: 0 1px 6px #0008;
}

.meter {
    position: absolute;
    top: 825px;
    right: 0;
    width: 13px;
    height: 74px;
    padding: 9px 3px 8px 5px;
    border-radius: 5px 0 0 5px;
    background: #4c5164;
}

.meter i {
    display: block;
    height: 100%;
    background: repeating-linear-gradient(transparent 0 2px, #4c5164 2px 3px), linear-gradient(#30343f 56%, #a8c060 56%, #6cc070 75%, #4cc0b0);
}

.mark {
    position: absolute;
    right: 96px;
    bottom: 10px;
    pointer-events: none;
}

.mark-shape {
    fill: #fffffff0;
    stroke: #b8b8b880;
    stroke-width: 2px;
    paint-order: stroke;
}

.m-latin {
    font-family: "Liberation Sans", sans-serif;
    font-size: 74px;
    font-weight: 700;
}

.m-du {
    font-family: "Liberation Sans", sans-serif;
    font-size: 50px;
}

.m-cjk {
    font-size: 56px;
    font-weight: 900;
}

.m-url {
    font-family: "Open Sans", sans-serif;
    font-size: 39px;
    font-weight: 400;
}
</style>
